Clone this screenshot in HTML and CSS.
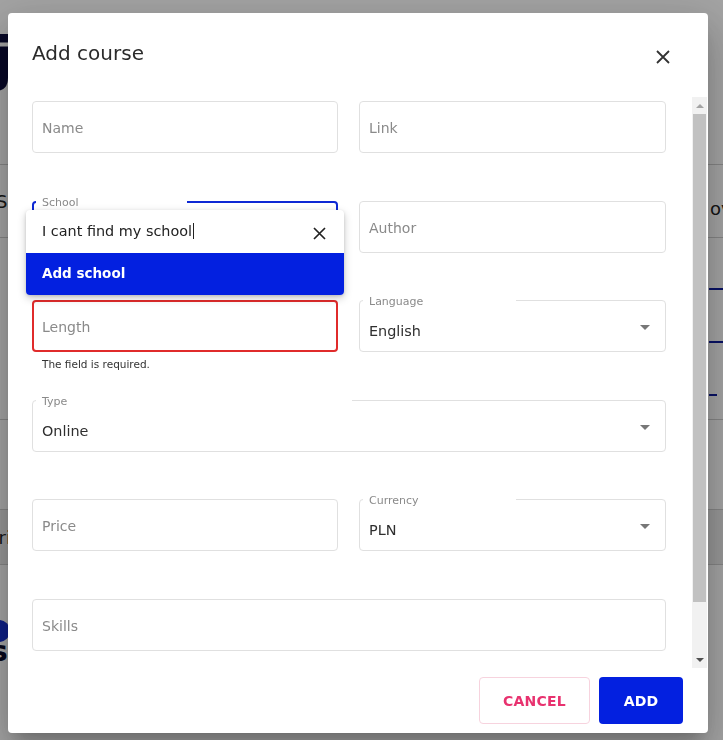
FILE: index.html
```html
<!DOCTYPE html>
<html lang="en">
<head>
<meta charset="utf-8">
<title>Add course</title>
<link rel="stylesheet" href="styles.css">
</head>
<body>
<div class="bg-page">
  <div class="bg-hero"><span class="bg-big">j</span></div>
  <div class="bg-row bg-row2"><span class="bg-left">Sc</span><span class="bg-right">ov</span></div>
  <div class="bg-row bg-row3">
    <span></span>
    <div class="bg-tabs"><div class="bg-tab"></div><div class="bg-tab"></div><div class="bg-tab short"></div></div>
  </div>
  <div class="bg-row bg-row4"></div>
  <div class="bg-row bg-band"><span class="bg-left bg-pri">Pri</span></div>
  <div class="bg-row6"><span class="bg-dot"></span><span class="bg-s">s</span></div>
</div>
<div class="backdrop"></div>

<div class="dialog">
  <div class="dialog-head">
    <h2 class="dialog-title">Add course</h2>
    <button class="close-btn" aria-label="Close">
      <svg width="14" height="14" viewBox="0 0 14 14"><path d="M1 1L13 13M13 1L1 13" stroke="#333" stroke-width="1.8" fill="none"/></svg>
    </button>
  </div>

  <div class="dialog-body">
    <div class="form-area">
      <div class="form-grid">
        <div class="cell"><div class="field"><span class="placeholder">Name</span></div></div>
        <div class="cell"><div class="field"><span class="placeholder">Link</span></div></div>

        <div class="cell">
          <div class="field select focused"><span class="label">School</span></div>
          <div class="popup">
            <div class="popup-input">
              <span class="typed">I cant find my school</span><span class="caret"></span>
              <svg class="popup-clear" width="13" height="13" viewBox="0 0 13 13"><path d="M1 1L12 12M12 1L1 12" stroke="#222" stroke-width="1.7" fill="none"/></svg>
            </div>
            <div class="popup-option">Add school</div>
          </div>
        </div>
        <div class="cell"><div class="field"><span class="placeholder">Author</span></div></div>

        <div class="cell">
          <div class="field error"><span class="placeholder">Length</span></div>
          <div class="helper">The field is required.</div>
        </div>
        <div class="cell"><div class="field select"><span class="label">Language</span><span class="value">English</span><span class="arrow"></span></div></div>

        <div class="cell wide"><div class="field select"><span class="label">Type</span><span class="value">Online</span><span class="arrow"></span></div></div>

        <div class="cell"><div class="field"><span class="placeholder">Price</span></div></div>
        <div class="cell"><div class="field select"><span class="label">Currency</span><span class="value">PLN</span><span class="arrow"></span></div></div>

        <div class="cell wide"><div class="field"><span class="placeholder">Skills</span></div></div>
      </div>
    </div>
    <div class="scrollbar">
      <div class="sb-btn"><span class="sb-up"></span></div>
      <div class="sb-thumb"></div>
      <div class="sb-track"></div>
      <div class="sb-btn"><span class="sb-down"></span></div>
    </div>
  </div>

  <div class="dialog-foot">
    <button class="btn btn-cancel">CANCEL</button>
    <button class="btn btn-add">ADD</button>
  </div>
</div>
</body>
</html>
```

FILE: styles.css
```css
html, body {
  margin: 0;
  padding: 0;
  height: 100%;
  overflow: hidden;
}
body {
  font-family: "DejaVu Sans", "Liberation Sans", sans-serif;
  background: #fff;
}

/* ---------- background page ---------- */
.bg-page {
  height: 740px;
  background: #fff;
  color: #111;
}
.bg-hero {
  height: 165px;
  border-bottom: 1px solid #cfcfcf;
  box-sizing: border-box;
  padding-top: 30px;
}
.bg-big {
  display: inline-block;
  margin-left: -7px;
  font: 700 58px/1 "DejaVu Sans", sans-serif;
  color: #0b0b3b;
}
.bg-row {
  border-bottom: 1px solid #cfcfcf;
  box-sizing: border-box;
  display: grid;
  grid-template-columns: 709px 1fr;
  align-items: center;
  font-size: 18px;
}
.bg-row2 { height: 73px; }
.bg-left { margin-left: -4px; color: #222; }
.bg-pri { margin-left: -12px; }
.bg-right { color: #222; padding-top: 14px; padding-left: 1px; }
.bg-row3 { height: 182px; align-items: start; }
.bg-tab {
  height: 50px;
  border-bottom: 2px solid #0d1b9e;
  margin-bottom: 1px;
}
.bg-tab.short { width: 8px; }
.bg-row4 { height: 90px; }
.bg-band { height: 55px; background: #ececec; }
.bg-row6 {
  display: flex;
  flex-direction: column;
  padding-top: 55px;
}
.bg-dot {
  width: 22px;
  height: 22px;
  border-radius: 50%;
  background: #1530d0;
  margin-left: -12px;
}
.bg-s {
  font: 700 28px/1 "DejaVu Sans", sans-serif;
  color: #0b0b2b;
  margin-left: -9px;
  margin-top: -4px;
}

.backdrop {
  position: fixed;
  inset: 0;
  background: rgba(0, 0, 0, 0.36);
}

/* ---------- dialog ---------- */
.dialog {
  position: fixed;
  left: 8px;
  top: 13px;
  width: 700px;
  height: 720px;
  background: #fff;
  border-radius: 4px;
  box-shadow: 0 11px 15px -7px rgba(0,0,0,.2), 0 24px 38px 3px rgba(0,0,0,.14), 0 9px 46px 8px rgba(0,0,0,.12);
  display: flex;
  flex-direction: column;
  overflow: hidden;
}
.dialog-head {
  display: flex;
  justify-content: space-between;
  align-items: flex-start;
  padding: 28px 38px 32px 24px;
  height: 84px;
  box-sizing: border-box;
}
.dialog-title {
  margin: 0;
  font-size: 20px;
  line-height: 24px;
  font-weight: 400;
  color: #2b2b2b;
}
.close-btn {
  border: 0;
  background: none;
  padding: 0;
  margin-top: 9px;
  width: 14px;
  height: 14px;
  display: block;
}
.close-btn svg { display: block; }

.dialog-body {
  height: 571px;
  display: flex;
}
.form-area {
  flex: 1;
  overflow: hidden;
  padding: 4px 26px 0 24px;
}
.form-grid {
  display: grid;
  grid-template-columns: 306px 307px;
  column-gap: 21px;
  grid-auto-rows: 52px;
  row-gap: 47.6px;
}
.cell { position: relative; }
.cell.wide { grid-column: span 2; }

.field {
  position: relative;
  height: 52px;
  box-sizing: border-box;
  border: 1px solid #e0e0e0;
  border-radius: 4px;
  padding: 2px 10px 0 9px;
  display: flex;
  align-items: center;
  font-size: 14px;
  line-height: 20px;
}
.placeholder { color: #8a8a8a; }
.field.error { border-color: #e02b2b; border-width: 2px; padding-left: 8px; }
.field.select {
  align-items: flex-start;
  padding-top: 20px;
}
.field.focused {
  border: 2px solid #0d28d4;
}
.label {
  position: absolute;
  left: 3px;
  top: -5px;
  width: 50%;
  box-sizing: border-box;
  padding-left: 6px;
  background: #fff;
  font-size: 11px;
  line-height: 12px;
  color: #8a8a8a;
}
.field.focused .label { left: 2px; top: -6px; padding-left: 6px; }
.value { color: #2f2f2f; font-size: 14.4px; }
.arrow {
  position: absolute;
  right: 15px;
  top: 24px;
  width: 0;
  height: 0;
  border-left: 5px solid transparent;
  border-right: 5px solid transparent;
  border-top: 5px solid #777;
}
.helper {
  margin-top: 6px;
  padding-left: 10px;
  font-size: 10.5px;
  line-height: 13px;
  color: #333;
}

/* popup */
.popup {
  position: absolute;
  left: -6px;
  top: 9px;
  width: 318px;
  background: #fff;
  border-radius: 4px;
  overflow: hidden;
  box-shadow: 0 3px 8px rgba(0,0,0,.22), 0 1px 3px rgba(0,0,0,.12);
  z-index: 2;
}
.popup-input {
  height: 43px;
  display: flex;
  align-items: center;
  padding: 0 18px 0 16px;
  font-size: 14.4px;
  color: #222;
}
.caret {
  width: 1px;
  height: 16px;
  background: #222;
  margin-left: 1px;
}
.popup-clear { margin-left: auto; margin-top: 4px; display: block; }
.popup-option {
  height: 42px;
  background: #0320e0;
  color: #fff;
  font-weight: 700;
  font-size: 13.5px;
  display: flex;
  align-items: center;
  padding-left: 16px;
  padding-bottom: 1px;
  box-sizing: border-box;
}

/* scrollbar */
.scrollbar {
  width: 15px;
  margin-right: 1px;
  display: flex;
  flex-direction: column;
  background: #f1f1f1;
}
.sb-btn {
  height: 17px;
  display: flex;
  align-items: center;
  justify-content: center;
}
.sb-up {
  width: 0; height: 0;
  border-left: 4px solid transparent;
  border-right: 4px solid transparent;
  border-bottom: 4px solid #a3a3a3;
}
.sb-down {
  width: 0; height: 0;
  border-left: 4px solid transparent;
  border-right: 4px solid transparent;
  border-top: 4px solid #505050;
}
.sb-thumb {
  height: 488px;
  margin: 0 1px;
  background: #c1c1c1;
}
.sb-track { flex: 1; }

/* footer */
.dialog-foot {
  flex: 1;
  display: flex;
  justify-content: flex-end;
  align-items: flex-start;
  gap: 9px;
  padding: 9px 25px 0 0;
}
.btn {
  height: 47px;
  box-sizing: border-box;
  border-radius: 4px;
  padding: 0 23px;
  font-family: "DejaVu Sans", sans-serif;
  font-weight: 700;
  font-size: 14px;
  letter-spacing: 0.2px;
}
.btn-cancel {
  width: 111px;
  background: #fff;
  border: 1px solid #f7d3de;
  color: #e8326f;
}
.btn-add {
  width: 84px;
  background: #0320e0;
  border: 0;
  color: #fff;
}
```
